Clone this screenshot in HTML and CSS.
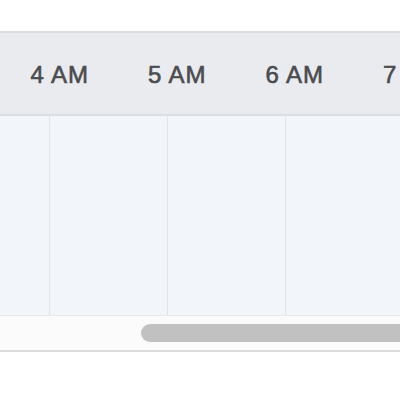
FILE: index.html
```html
<!DOCTYPE html>
<html>
<head>
<meta charset="utf-8">
<link rel="stylesheet" href="styles.css">
</head>
<body>
<div class="top-space"></div>
<div class="timeline">
  <div class="header">
    <div class="hour">4 AM</div>
    <div class="hour">5 AM</div>
    <div class="hour">6 AM</div>
    <div class="hour">7 AM</div>
  </div>
  <div class="grid">
    <div class="col first"></div>
    <div class="col"></div>
    <div class="col"></div>
    <div class="col"></div>
  </div>
  <div class="scroll">
    <div class="thumb"></div>
  </div>
</div>
</body>
</html>
```
FILE: styles.css
```css
html, body {
  margin: 0;
  padding: 0;
  background: #ffffff;
  overflow: hidden;
}
.top-space {
  height: 31px;
}
.timeline {
  width: 400px;
  overflow: hidden;
  border-top: 2px solid #dcdee1;
  border-bottom: 2px solid #dcdcdc;
}
.header {
  display: flex;
  height: 81px;
  padding-left: 1px;
  background: #e9ebee;
  border-bottom: 2px solid #dadde1;
  white-space: nowrap;
}
.hour {
  flex: 0 0 117.5px;
  display: flex;
  align-items: center;
  justify-content: center;
  padding-top: 3px;
  font-family: "Liberation Sans", Arial, sans-serif;
  font-size: 24px;
  letter-spacing: 1px;
  color: #4a4c4f;
  -webkit-text-stroke: 0.6px #4a4c4f;
}
.grid {
  display: flex;
  height: 199px;
  background: #f2f6fa;
  border-bottom: 1px solid #e6e9ec;
}
.col {
  flex: 0 0 117px;
  border-left: 1px solid #e1e5e9;
}
.col.first {
  flex: 0 0 49px;
  border-left: none;
}
.scroll {
  height: 34px;
  background: #fbfbfb;
  display: flex;
  align-items: center;
  padding-left: 141px;
}
.thumb {
  flex: 1;
  height: 18px;
  margin-right: -20px;
  background: #c1c1c1;
  border-radius: 9px;
}
```
